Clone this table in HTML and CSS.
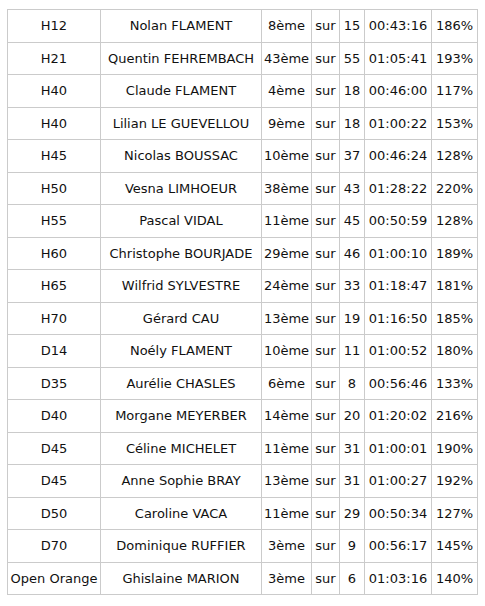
FILE: index.html
```html
<!DOCTYPE html>
<html>
<head>
<meta charset="utf-8">
<link rel="stylesheet" href="styles.css">
</head>
<body>
<table class="results">
<colgroup>
<col class="c-cat"><col class="c-name"><col class="c-rank"><col class="c-sur"><col class="c-tot"><col class="c-time"><col class="c-pct">
</colgroup>
<tbody>
<tr><td>H12</td><td>Nolan FLAMENT</td><td>8ème</td><td>sur</td><td>15</td><td>00:43:16</td><td>186%</td></tr>
<tr><td>H21</td><td>Quentin FEHREMBACH</td><td>43ème</td><td>sur</td><td>55</td><td>01:05:41</td><td>193%</td></tr>
<tr><td>H40</td><td>Claude FLAMENT</td><td>4ème</td><td>sur</td><td>18</td><td>00:46:00</td><td>117%</td></tr>
<tr><td>H40</td><td>Lilian LE GUEVELLOU</td><td>9ème</td><td>sur</td><td>18</td><td>01:00:22</td><td>153%</td></tr>
<tr><td>H45</td><td>Nicolas BOUSSAC</td><td>10ème</td><td>sur</td><td>37</td><td>00:46:24</td><td>128%</td></tr>
<tr><td>H50</td><td>Vesna LIMHOEUR</td><td>38ème</td><td>sur</td><td>43</td><td>01:28:22</td><td>220%</td></tr>
<tr><td>H55</td><td>Pascal VIDAL</td><td>11ème</td><td>sur</td><td>45</td><td>00:50:59</td><td>128%</td></tr>
<tr><td>H60</td><td>Christophe BOURJADE</td><td>29ème</td><td>sur</td><td>46</td><td>01:00:10</td><td>189%</td></tr>
<tr><td>H65</td><td>Wilfrid SYLVESTRE</td><td>24ème</td><td>sur</td><td>33</td><td>01:18:47</td><td>181%</td></tr>
<tr><td>H70</td><td>Gérard CAU</td><td>13ème</td><td>sur</td><td>19</td><td>01:16:50</td><td>185%</td></tr>
<tr><td>D14</td><td>Noély FLAMENT</td><td>10ème</td><td>sur</td><td>11</td><td>01:00:52</td><td>180%</td></tr>
<tr><td>D35</td><td>Aurélie CHASLES</td><td>6ème</td><td>sur</td><td>8</td><td>00:56:46</td><td>133%</td></tr>
<tr><td>D40</td><td>Morgane MEYERBER</td><td>14ème</td><td>sur</td><td>20</td><td>01:20:02</td><td>216%</td></tr>
<tr><td>D45</td><td>Céline MICHELET</td><td>11ème</td><td>sur</td><td>31</td><td>01:00:01</td><td>190%</td></tr>
<tr><td>D45</td><td>Anne Sophie BRAY</td><td>13ème</td><td>sur</td><td>31</td><td>01:00:27</td><td>192%</td></tr>
<tr><td>D50</td><td>Caroline VACA</td><td>11ème</td><td>sur</td><td>29</td><td>00:50:34</td><td>127%</td></tr>
<tr><td>D70</td><td>Dominique RUFFIER</td><td>3ème</td><td>sur</td><td>9</td><td>00:56:17</td><td>145%</td></tr>
<tr><td>Open Orange</td><td>Ghislaine MARION</td><td>3ème</td><td>sur</td><td>6</td><td>01:03:16</td><td>140%</td></tr>
</tbody>
</table>
</body>
</html>
```
FILE: styles.css
```css
html, body {
  margin: 0;
  padding: 0;
  background: #ffffff;
}
body {
  padding: 9px 0 0 7px;
}
.results {
  border-collapse: collapse;
  table-layout: fixed;
  width: 470px;
  font-family: "Comic Sans MS", "DejaVu Sans", sans-serif;
  font-size: 13px;
  color: #111111;
}
.results td {
  border: 1px solid #cbcbcb;
  height: 31.5px;
  padding: 0;
  text-align: center;
  vertical-align: middle;
  white-space: nowrap;
  overflow: hidden;
}
.c-cat { width: 93px; }
.c-name { width: 161px; }
.c-rank { width: 50px; }
.c-sur { width: 28px; }
.c-tot { width: 25px; }
.c-time { width: 67px; }
.c-pct { width: 46px; }
```
